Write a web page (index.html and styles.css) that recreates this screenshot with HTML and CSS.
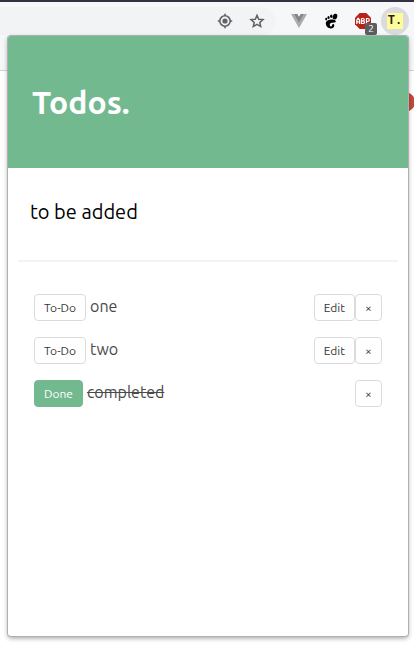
FILE: index.html
```html
<!DOCTYPE html>
<html lang="en">
<head>
<meta charset="utf-8">
<meta name="viewport" content="width=device-width, initial-scale=1">
<title>Todos</title>
<link rel="stylesheet" href="styles.css">
</head>
<body>
<div class="browser">
  <div class="toolbar">
    <div class="omnibox">
      <button class="icon-button" aria-label="Location">
        <svg width="16" height="16" viewBox="0 0 16 16" fill="none" stroke="#5f6368" stroke-width="1.6"><circle cx="8" cy="8" r="5.2"/><circle cx="8" cy="8" r="2.6" fill="#5f6368" stroke="none"/><path d="M8 .8v2M8 13.200v2M.8 8h2M13.200 8h2"/></svg>
      </button>
      <button class="icon-button" aria-label="Bookmark">
        <svg width="16" height="16" viewBox="0 0 16 16" fill="none" stroke="#5f6368" stroke-width="1.5"><path d="M8 2.300 9.700 6.200 14 6.600 10.800 9.400 11.700 13.600 8 11.400 4.300 13.600 5.200 9.400 2 6.600 6.300 6.200Z"/></svg>
      </button>
    </div>
    <div class="extensions">
      <button class="icon-button" aria-label="Vue devtools">
        <svg width="16" height="16" viewBox="0 0 16 16"><path fill="#ababab" d="M0 1h6.200L8 4l1.800-3H16L8 15Z"/><path fill="#858585" d="M3.200 1h3L8 4l1.800-3h3L8 9.400Z"/></svg>
      </button>
      <button class="icon-button" aria-label="GNOME extensions">
        <svg width="16" height="16" viewBox="0 0 16 16" fill="#000"><ellipse cx="12" cy="3.600" rx="2.200" ry="2.900" transform="rotate(18 12 3.600)"/><ellipse cx="8.300" cy="3.300" rx="1.200" ry="1.800"/><ellipse cx="5.500" cy="4.500" rx="1.100" ry="1.500"/><ellipse cx="3.200" cy="6.100" rx="1" ry="1.300"/><path d="M10.800 6.700C8 5.800 2.800 7 2.800 10.300c0 2.900 2.300 5.200 5 5.200 2.300 0 3.800-1.500 3.500-3.400-.2-1.200-1.500-1.300-2-.5-.4.700-.1 1.700-1 1.900-1.300.2-2.100-2.200-1-3.100 1.500-1.200 5.900-.2 5.500-2.100-.2-.8-1-1.300-2-1.600Z"/></svg>
      </button>
      <button class="icon-button blocker" aria-label="Ad blocker, 2 blocked">
        <svg width="16" height="16" viewBox="0 0 16 16"><path fill="#b7231a" d="M4.700 0h6.600L16 4.700v6.600L11.300 16H4.700L0 11.300V4.700Z"/><path fill="none" stroke="#fff" stroke-width="1.200" d="M1.800 11V7l1.400-1.700L4.600 7v4M1.800 8.800h2.800M6.500 5.500v5H8c2 0 2-2.600 0-2.600H6.500M8 7.900c1.600 0 1.600-2.400 0-2.400H6.500M11.500 11V5.500h1.300c2 0 2 3 0 3h-1.300"/></svg>
        <span class="count">2</span>
      </button>
      <button class="icon-button active" aria-label="Todos"><span class="todo-icon">T.</span></button>
    </div>
  </div>
  <div class="bookmarks"></div>
  <div class="page"><span class="avatar"></span></div>
</div>
<main class="popup">
  <header class="header"><h1>Todos.</h1></header>
  <form class="add">
    <input class="new-todo" type="text" aria-label="New todo" value="to be added">
  </form>
  <ul class="list">
    <li class="item"><button class="button">To-Do</button><span class="label">one</span><span class="actions"><button class="button">Edit</button><button class="button remove" aria-label="Remove one">×</button></span></li>
    <li class="item"><button class="button">To-Do</button><span class="label">two</span><span class="actions"><button class="button">Edit</button><button class="button remove" aria-label="Remove two">×</button></span></li>
    <li class="item"><button class="button done">Done</button><span class="label completed">completed</span><span class="actions"><button class="button remove" aria-label="Remove completed">×</button></span></li>
  </ul>
</main>
</body>
</html>
```
FILE: styles.css
```css
* { box-sizing: border-box; }

body {
  margin: 0;
  min-height: 100vh;
  position: relative;
  overflow: hidden;
  background: #fff;
  font-family: Ubuntu, "Noto Sans", sans-serif;
}

button, input { font-family: inherit; margin: 0; }

.toolbar {
  display: flex;
  justify-content: flex-end;
  height: 36px;
  padding-top: 5px;
  border-top: 2px solid #35323f;
  background: #f6f7f9;
}

.omnibox {
  flex: 1;
  display: flex;
  justify-content: flex-end;
  align-items: center;
  gap: 16px;
  height: 28px;
  padding-right: 10px;
  border-radius: 0 14px 14px 0;
  background: #f1f3f4;
}

.extensions {
  display: flex;
  align-items: center;
  gap: 16px;
  height: 28px;
  padding: 0 11px 0 16px;
}

.icon-button {
  display: flex;
  align-items: center;
  justify-content: center;
  width: 16px;
  height: 16px;
  padding: 0;
  border: 0;
  background: none;
}

.icon-button svg { flex: none; }

.blocker { position: relative; }

.count {
  position: absolute;
  left: 10px;
  top: 10px;
  width: 12px;
  height: 12px;
  border-radius: 2px;
  background: #5c5d5f;
  color: #fff;
  font-size: 10px;
  line-height: 12px;
  text-align: center;
}

.active {
  width: 28px;
  height: 28px;
  margin: 0 -6px 0 -6px;
  border-radius: 50%;
  background: #d9dbde;
}

.todo-icon {
  width: 16px;
  height: 16px;
  background: #fffb96;
  color: #222;
  font: bold 12px/16px "Liberation Mono", monospace;
  text-align: center;
}

.bookmarks {
  height: 35px;
  border-bottom: 1px solid #cfd1e3;
  background: #f6f7f9;
}

.page {
  display: flex;
  justify-content: flex-end;
  padding-top: 21px;
}

.avatar {
  width: 20px;
  height: 20px;
  margin-right: -1px;
  border-radius: 50%;
  background: #bf4a3c;
}

.popup {
  position: absolute;
  inset: 36px 6px 10px 8px;
  overflow: hidden;
  border-radius: 3px;
  background: #fff;
  box-shadow: 0 0 0 1px #b0b0b0, 0 2px 5px rgba(0, 0, 0, 0.4);
}

.header {
  padding: 45px 24px;
  background: #72b98f;
  color: #fff;
}

.header h1 {
  margin: 0;
  font-size: 32px;
  line-height: 42px;
}

.add {
  margin: 0 10px;
  padding: 23px 0 29px;
  border-bottom: 2px solid #f3f3f3;
}

.new-todo {
  display: block;
  width: 100%;
  height: 40px;
  padding: 0 12px;
  border: 0;
  outline: 0;
  background: none;
  color: #000;
  font-size: 20px;
}

.list {
  display: flex;
  flex-direction: column;
  gap: 16px;
  margin: 0;
  padding: 32px 26px;
  list-style: none;
}

.item {
  display: flex;
  align-items: center;
  gap: 4px;
  color: #4a4a4a;
}

.label {
  font-size: 16px;
  line-height: 24px;
  margin-bottom: 3px;
}

.completed { text-decoration: line-through; }

.actions {
  display: flex;
  margin-left: auto;
}

.button {
  height: 27px;
  padding: 0 9px;
  border: 1px solid #dbdbdb;
  border-radius: 4px;
  background: #fff;
  color: #363636;
  font-size: 12px;
  line-height: 24px;
}

.remove {
  width: 27px;
  padding: 0;
}

.done {
  border-color: #72b98f;
  background: #72b98f;
  color: #fff;
}
```
